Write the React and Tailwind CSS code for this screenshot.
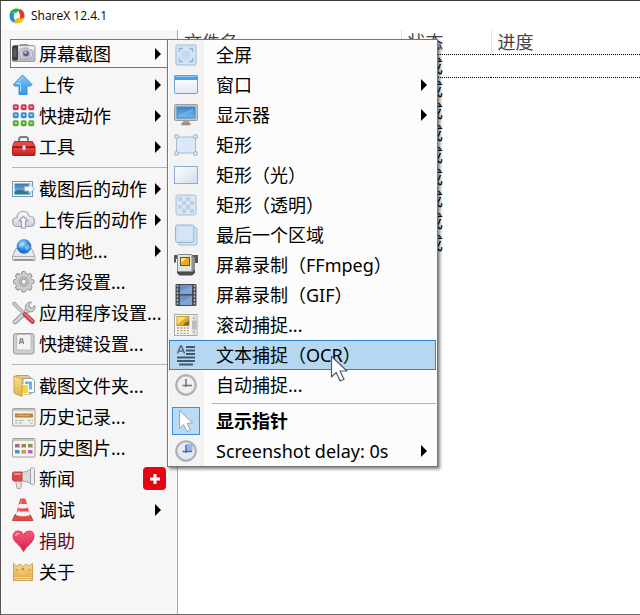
import { useState } from "react";

function Icon({ children, size = 24 }) {
  return (
    <svg width={size} height={size} viewBox="0 0 24 24" fill="none" aria-hidden="true" className="shrink-0">
      {children}
    </svg>
  );
}

function Gradient({ id, from, to }) {
  return (
    <linearGradient id={id} x1="0" y1="0" x2="0" y2="1">
      <stop offset="0" stopColor={from} />
      <stop offset="1" stopColor={to} />
    </linearGradient>
  );
}

const Logo = () => (
  <svg width="16" height="16" viewBox="0 0 16 16" aria-hidden="true" className="shrink-0">
    <path d="M8 .5C4 .3 1 3 .7 6.500c1.500-2 4-2.700 6.300-1.500C9 3.500 10.500 2.500 11 1.200 10 .7 9 .5 8 .5Z" fill="#2fb344" />
    <path d="M11 .9C9.500 2.200 9.300 4.200 11 6.800c.3 1.700 0 3.200-.5 4.200 2 .5 3.500 0 4.800-1.500C16.200 5.500 14.500 2.300 11 .9Z" fill="#e8382c" />
    <path d="M15.300 9.300c-2 1.700-4.800 1.500-6.800.5-1.500 1.200-3.500 2.200-4.200 4.600 4 2.300 9.500 1 11-5.100Z" fill="#f5bd18" />
    <path d="M.6 6.300C0 10 1.500 13 4.700 14.700 6.200 13 6 11.500 4.800 9.500 4.500 8 4.800 6.200 5.700 5 3.300 4 1.500 4.600.6 6.300Z" fill="#1c8fe0" />
    <circle cx="8" cy="7.500" r="2.600" fill="#fff" />
  </svg>
);

const CameraIcon = () => (
  <Icon>
    <defs><Gradient id="cam" from="#e6e6ea" to="#b4b4ba" /></defs>
    <path d="M8 4V2.500h8V4" fill="#b9b9be" stroke="#9a9aa0" />
    <rect x=".5" y="3.500" width="22.500" height="16" rx="1.500" fill="url(#cam)" stroke="#9a9aa2" />
    <path d="M.2 5 1.500 3.500H6V17l-1 1.500H.2Z" fill="#3f3f42" />
    <path d="M1.500 6.500h3v8.500h-3Z" fill="#5c5c61" />
    <ellipse cx="14" cy="11.500" rx="7" ry="5.500" fill="#d3d3db" stroke="#9c9ca8" strokeWidth=".8" />
    <circle cx="14" cy="11.500" r="4" fill="#a7a9ba" />
    <circle cx="14" cy="11.500" r="2.600" fill="#565b80" />
    <circle cx="13.500" cy="10.500" r="1.200" fill="#cdd3e8" />
    <path d="M17 5h5v2h-5Z" fill="#f4f4f6" />
  </Icon>
);

const UploadIcon = () => (
  <Icon>
    <defs><Gradient id="up" from="#7cc8ff" to="#3398ec" /></defs>
    <path d="M10.500 2 20 11.500 18.500 13H15v8.500H7V13H2.500L1.500 11.500Z" fill="url(#up)" stroke="#3b8bd4" strokeLinejoin="round" />
    <path d="M10.500 4 4.500 10.500H8.500v8" stroke="#a5dcff" />
  </Icon>
);

const GridIcon = () => (
  <Icon>
    {["#cf3b50", "#3c90d2", "#5aab35"].map((color, row) =>
      [1.5, 9.5, 17].map((x) => (
        <g key={color + x}>
          <rect x={x} y={row * 8 + 1} width="4.500" height="4.500" rx="1" fill={color} stroke={color} strokeWidth="1.500" />
          <rect x={x + 1} y={row * 8 + 2} width="2.500" height="2" rx=".5" fill="#fff" opacity=".5" />
        </g>
      ))
    )}
  </Icon>
);

const ToolboxIcon = () => (
  <Icon>
    <defs><Gradient id="tool" from="#ec4d46" to="#c01c1c" /></defs>
    <path d="M7 6.500V4.500Q7 2 9.500 2h4Q16 2 16 4.500v2" stroke="#777c80" strokeWidth="1.800" />
    <path d="M2.500 6.500h18l2.500 5v1H.5v-1Z" fill="#e44a45" stroke="#b32a2a" />
    <rect x=".5" y="11.500" width="22.500" height="9" rx="1" fill="url(#tool)" stroke="#a81c1c" />
    <path d="M1 12.500h21.500" stroke="#981717" />
    <rect x="10.500" y="10.500" width="3" height="4.500" rx=".5" fill="#ececec" stroke="#999" strokeWidth=".5" />
  </Icon>
);

const AfterCaptureIcon = () => (
  <Icon>
    <defs><Gradient id="aft" from="#3675bb" to="#8ed4df" /></defs>
    <rect x=".5" y="4.500" width="20" height="15" fill="#f8fbff" stroke="#7894b7" />
    <rect x="2.500" y="6.500" width="16" height="11" fill="url(#aft)" />
    <path d="M2.500 14.500q5-3 9-1t7-1v5h-16Z" fill="#2f7c85" />
    <path d="M12.500 9.500H17V6.500l5.500 5.300-5.500 5.200v-3h-4.500Z" fill="#f6f9fd" stroke="#9fb1c8" strokeLinejoin="round" />
  </Icon>
);

const CloudIcon = () => (
  <Icon>
    <defs><Gradient id="cld" from="#fafafe" to="#cfcfde" /></defs>
    <path d="M6 18.500Q.7 18.500.7 14T5 9.500Q5.500 3.500 11 3.500q5 0 6 4.500 5.500 0 5.500 5.500 0 5-5 5Z" fill="url(#cld)" stroke="#a3a3b8" strokeWidth="1.200" />
    <path d="m11.500 8.500 4.500 4.500h-2.500v7h-4v-7H7Z" fill="#fafaff" stroke="#9c9cb2" strokeWidth="1.200" strokeLinejoin="round" />
  </Icon>
);

const DestinationIcon = () => (
  <Icon>
    <defs>
      <radialGradient id="globe" cx=".4" cy=".3"><stop stopColor="#a4deff" /><stop offset="1" stopColor="#1b73cc" /></radialGradient>
    </defs>
    <path d="M4 9.500h15.500l3.500 8v3q0 1-1 1h-20.500q-1 0-1-1v-3Z" fill="#e9e9eb" stroke="#a0a0a5" />
    <path d="M1 17.500h21.500" stroke="#b0b0b4" />
    <path d="M2 20.500h19.500" stroke="#8c8c90" />
    <circle cx="12" cy="7.500" r="7" fill="url(#globe)" stroke="#2d80c9" strokeWidth=".6" />
    <path d="M7 5 10 2.500l2 2-2 3-3 1ZM13 7.500l4-2 1 3.500-3 3-2-2Z" fill="#a5dbfb" opacity=".6" />
  </Icon>
);

const GearIcon = () => (
  <Icon>
    {[0, 45, 90, 135].map((angle) => (
      <rect key={angle} x="9.500" y="1.500" width="4.500" height="20.500" rx="1.500" fill="#cdcdcd" stroke="#909090" transform={`rotate(${angle} 11.750 11.750)`} />
    ))}
    <circle cx="11.750" cy="11.750" r="7.700" fill="#cdcdcd" />
    <circle cx="11.750" cy="11.750" r="4.700" fill="#c0c0c0" stroke="#a3a3a3" />
    <circle cx="11.750" cy="11.750" r="2.500" fill="#f7f7f7" stroke="#999" />
  </Icon>
);

const WrenchIcon = () => (
  <Icon>
    <path d="m3 21 13-12" stroke="#8b8f93" strokeWidth="4.500" strokeLinecap="round" />
    <path d="m3 21 13-12" stroke="#d6d8da" strokeWidth="2.700" strokeLinecap="round" />
    <path d="M19.500 1 17 4l.5 2.500 2.500.5 2.800-2.800q.9 4-1.800 6t-6-.5Q12 7 14 3.500 16.500.5 19.500 1Z" fill="#cfd2d5" stroke="#94989c" />
    <path d="m.7 2 1.800-1.200L12.500 11l-1.800 1.800L1.200 4Z" fill="#c9ccd0" stroke="#999da1" />
    <path d="m13 13.500 7.500 7" stroke="#c13742" strokeWidth="4.500" strokeLinecap="round" />
    <path d="m13 13 7.500 7" stroke="#ea6d75" strokeWidth="2.300" strokeLinecap="round" />
  </Icon>
);

const KeyIcon = () => (
  <Icon>
    <rect x="1.500" y="1.500" width="20.500" height="20.500" rx="2" fill="#cfcfcf" stroke="#9b9b9b" />
    <rect x="4.500" y="2.500" width="14.500" height="15.500" rx="1.500" fill="#f3f3f3" stroke="#bcbcbc" />
    <path d="m7.500 12 1-5h2l1 5m-3.500-2h3" stroke="#858585" strokeWidth="1.300" />
  </Icon>
);

const FolderIcon = () => (
  <Icon>
    <defs><Gradient id="fold" from="#fbe28f" to="#dfb24b" /></defs>
    <path d="M4 1.500h12l3 2.500v16H4Z" fill="#efcd77" stroke="#c29d4a" />
    <path d="M11 4.500h9l2.500 2v12H11Z" fill="#fbfdff" stroke="#8fa3b6" />
    <path d="M13 7.500h7v8h-7Z" fill="#77aede" />
    <path d="M9 10.500h7.500v9H9Z" fill="#f2d541" stroke="#fff" />
    <path d="m2 2 8 2.500V22.500l-8-3.500Z" fill="url(#fold)" stroke="#c8a24a" strokeLinejoin="round" />
  </Icon>
);

const HistoryIcon = () => (
  <Icon>
    <rect x=".5" y="3.500" width="22.500" height="17.500" rx="1" fill="#f0efed" stroke="#a19f98" />
    <path d="M1 4h21.500v2H1Z" fill="#c9c6c0" />
    <path d="M3 8.500h18v4H3Z" fill="#bd8434" />
    <path d="M5 10.500h13" stroke="#dcad5e" />
    <path d="M3 15.500h9M3 18h7m6-2.500h5m-3 2.500h3" stroke="#b0afab" strokeWidth="1.200" strokeDasharray="3 1" />
  </Icon>
);

const ImageHistoryIcon = () => (
  <Icon>
    <rect x=".5" y="2.500" width="22.500" height="18.500" rx="1" fill="#f6f5f3" stroke="#a19f98" />
    <path d="M1 3h21.500v2H1Z" fill="#c9c6c0" />
    {["#9c6d87", "#a5804c", "#86905c", "#4f93bb", "#cf9a45", "#c05fb0"].map((color, i) => (
      <g key={color}>
        <rect x={3 + (i % 3) * 6.5} y={i < 3 ? 8 : 14} width="4.500" height="4" fill={color} />
        <path d={`M${3 + (i % 3) * 6.5} ${i < 3 ? 11.5 : 17.5}h4.500`} stroke="#e0c36a" />
      </g>
    ))}
  </Icon>
);

const NewsIcon = () => (
  <Icon>
    <path d="M3.500 13h5v3l1.500.5-1.500 5H5Z" fill="#dfdfdf" stroke="#ababab" />
    <path d="M9 5.500q6 0 11-4v15.500q-5-3-11-3Z" fill="#dadadd" stroke="#a2a2a7" />
    <path d="M2 5h8v9H2Q.5 14 .5 12V7Q.5 5 2 5Z" fill="#de4748" stroke="#c14447" />
    <rect x="18.500" y=".7" width="4" height="17" rx="1.800" fill="#eeeef0" stroke="#a2a2a7" />
    <path d="M2 7h7" stroke="#f5a09d" strokeWidth="1.500" />
  </Icon>
);

const ConeIcon = () => (
  <Icon>
    <path d="M3 16.500h15L21 22.500H.5Z" fill="#e04a4a" stroke="#c04444" strokeLinejoin="round" />
    <path d="M9 .5h3.500q1 0 1.200 1L18.500 18.500Q11 22 3.500 18.500L7.800 1.500Q8 .5 9 .5Z" fill="#e45050" />
    <path d="m6.800 6h8.200l1 3.700q-5 1.500-10.200 0ZM4.700 13.500h12.500l.9 3.500q-7 2.500-14.200 0Z" fill="#f1f1f1" />
    <path d="m9.500 2-3.500 16" stroke="#fff" strokeWidth="1.500" opacity=".3" />
  </Icon>
);

const HeartIcon = () => (
  <Icon>
    <defs><Gradient id="heart" from="#f65a79" to="#d91e48" /></defs>
    <path d="M11.500 22.500Q9 17.500 4.500 14 1 11 1 7 1.500 2 6.500 2q4 0 5 4 1.500-4 5.500-4 5 0 5 5 0 4-3.500 7.500-4.500 3.500-7 8Z" fill="url(#heart)" stroke="#d93a5b" />
    <path d="M3.500 7q.5-2.500 3.500-2.500" stroke="#ffa5b6" strokeWidth="1.500" />
  </Icon>
);

const CrownIcon = () => (
  <Icon>
    <defs><Gradient id="crown" from="#f8d98c" to="#d9a84a" /></defs>
    <path d="m1.500 3.500 3 2.500L7.500 4l3.500 2.500L14 4l3 2 3.500-2.500V20.500h-19Z" fill="url(#crown)" stroke="#cda454" strokeLinejoin="round" />
    <path d="M2 17.500h18M3 19.500h16" stroke="#f7e0a4" />
    <circle cx="4.500" cy="10" r="1" fill="#e08a4e" />
    <circle cx="11" cy="9" r="1.200" fill="#dc6f47" />
    <circle cx="17.500" cy="10" r="1" fill="#e08a4e" />
    <path d="m7 13 4-2 4 2-4 2Z" fill="#f6c656" />
  </Icon>
);

const FullscreenIcon = () => (
  <Icon>
    <rect x="2" y="2" width="20" height="20" rx="1" fill="#d3e4f4" stroke="#9dbad6" />
    <path d="M5.500 9V5.500H9m6 0h3.500V9m0 6v3.500H15m-6 0H5.500V15" stroke="#93b4d6" strokeWidth="1.300" />
    <circle cx="12" cy="12" r="4.500" fill="#c3daef" />
  </Icon>
);

const WindowIcon = () => (
  <Icon>
    <defs><Gradient id="win" from="#fff" to="#dfe9f3" /></defs>
    <rect x=".5" y="2.500" width="23" height="18" rx="1" fill="url(#win)" stroke="#6f9fcf" />
    <path d="M.5 2.500h23V7H.5Z" fill="#4c9fe4" />
    <path d="M1.500 3.500h21" stroke="#8cc5f5" />
  </Icon>
);

const MonitorIcon = () => (
  <Icon>
    <defs><Gradient id="mon" from="#3585cb" to="#74b5ea" /></defs>
    <path d="M9 17h6v4H9Z" fill="#a2a6aa" />
    <path d="M7.500 21h9" stroke="#978a81" strokeWidth="2.500" />
    <rect x=".5" y="1.500" width="23" height="16" rx="1" fill="#c3c6c8" stroke="#9a9ea1" />
    <rect x="3" y="4" width="18" height="11" fill="url(#mon)" stroke="#4a88bc" />
    <path d="M4 13 19 5v3L8 14Z" fill="#89c8fa" opacity=".4" />
  </Icon>
);

const RegionIcon = () => (
  <Icon>
    <rect x="2.500" y="4" width="19" height="16" fill="#dbe8f5" stroke="#a5bcd4" />
    {[[2.5, 3.5], [21.5, 3.5], [2.5, 20.5], [21.5, 20.5]].map(([x, y]) => (
      <circle key={`${x}-${y}`} cx={x} cy={y} r="2" fill="#dde6ef" stroke="#9ab0c8" />
    ))}
  </Icon>
);

const LightRegionIcon = () => (
  <Icon>
    <defs><linearGradient id="light" x1="0" y1="0" x2="1" y2="1"><stop stopColor="#fff" /><stop offset="1" stopColor="#cfdeef" /></linearGradient></defs>
    <rect x=".5" y="3.500" width="23" height="17" fill="url(#light)" stroke="#90add0" />
  </Icon>
);

const TransparentIcon = () => (
  <Icon>
    <rect x="2" y="2" width="20" height="20" rx="2" fill="#dbe7f3" stroke="#a5bed6" />
    {[0, 1, 2, 3].map((row) => [0, 2].map((col) => (
      <rect key={`${row}-${col}`} x={4 + (col + (row % 2)) * 4} y={4 + row * 4} width="4" height="4" fill="#b9d0e7" />
    )))}
  </Icon>
);

const LastRegionIcon = () => (
  <Icon>
    <rect x="4.500" y="4.500" width="18.500" height="17.500" rx="2" fill="#d6e6f5" stroke="#9bb9d5" />
    <rect x="1.500" y="2" width="18.500" height="17.500" rx="2" fill="#cbe0f3" stroke="#98b6d3" />
    <path d="M4 4h14v13H4Z" fill="#dbeafa" opacity=".5" />
  </Icon>
);

const CamcorderIcon = () => (
  <Icon>
    <path d="M0 2h8v4H2v3.500H0Zm17 0h7v8h-3V5h-4Z" fill="#565554" />
    <path d="M3 16 17 18l4-3v5l-3 2.500H5.500L3 20Z" fill="#4c4c4d" />
    <rect x="3.500" y="1.500" width="14.500" height="17" rx="1" fill="#e2e2e2" stroke="#888" />
    <path d="M18 3 21 4.500v12L18 19Z" fill="#8f8f8f" />
    <rect x="6.500" y="4.500" width="9" height="8" fill="#dfb01b" stroke="#5d5534" />
    <path d="m7 5h5.500l-5.500 5Z" fill="#ffe679" />
  </Icon>
);

const FilmIcon = () => (
  <Icon>
    <rect x="1.500" y="1" width="21" height="22" rx="1" fill="#464b53" />
    <path d="M3.500 2v20M20.500 2v20" stroke="#b9bec5" strokeWidth="1.500" strokeDasharray="2 1.500" />
    <path d="M6 2h12v9H6Zm0 10.500h12v9.500H6Z" fill="#6a8fc2" />
    <path d="m6 8 12-5v8H6Zm0 11 12-6v9H6Z" fill="#91b2dd" opacity=".6" />
  </Icon>
);

const ScrollIcon = () => (
  <Icon>
    <rect x=".5" y="1.500" width="22.500" height="21" fill="#f4f4f3" stroke="#aaa8a3" />
    <rect x="3" y="3.500" width="12" height="9" fill="#dfb01b" stroke="#c09d3b" />
    <path d="M3.500 4h9l-9 7Z" fill="#ffe366" />
    <path d="M11 9.500q3 0 4-3.500v6.500H9Z" fill="#846926" />
    <path d="M17.500 2h5v20h-5Z" fill="#e3e3e3" />
    <path d="M18 7.500h4.500v9H18Z" fill="#bcbcbc" />
    <path d="m19 5.500 1-1.500 1 1.500Zm0 13 1 1.500 1-1.500Z" fill="#777" />
    <path d="M3 15h12" stroke="#d98f8a" strokeWidth="1.300" strokeDasharray="2 1.300" />
    <path d="M3 17.700h12" stroke="#b5ae52" strokeWidth="1.300" strokeDasharray="2 1.300" />
    <path d="M3 20.300h12" stroke="#8fb0ce" strokeWidth="1.300" strokeDasharray="2 1.300" />
  </Icon>
);

const OcrIcon = () => (
  <Icon>
    <path d="m3.500 10.500 3-7.500h1l3 7.500m-6-2.500h5" stroke="#4e6c8a" strokeWidth="1.600" />
    <path d="M12 4h9M12 7.500h9M12 11h9M3 14.500h18M3 18h18M5 21.500h14" stroke="#42576c" strokeWidth="2" />
  </Icon>
);

const ClockIcon = ({ blue }) => (
  <Icon>
    <circle cx="12" cy="12" r="9.500" fill={blue ? "#e6eaf4" : "#eef0ef"} stroke="#b3b6b8" strokeWidth="2" />
    <circle cx="12" cy="12" r="10.500" stroke="#9a9ea0" strokeWidth=".6" />
    {blue && <path d="M12 5h6.500v7.500H12Z" fill="#a0b1ea" />}
    <path d="M12 6v8M8.500 12.500h9.500" stroke={blue ? "#5369ad" : "#6d7376"} strokeWidth="1.500" />
  </Icon>
);

const PointerIcon = () => (
  <Icon>
    <path d="M5.500 1.500v18l4-4 3.500 7 3.500-1.500-3.500-6.500 5.500-.5Z" fill="#fff" stroke="#9aa7b6" strokeLinejoin="round" />
  </Icon>
);

const Arrow = () => (
  <svg width="6" height="12" viewBox="0 0 6 12" aria-hidden="true" className="shrink-0">
    <path d="M0 0v12l6-6Z" fill="#000" />
  </svg>
);

const SIDEBAR = [
  [
    { label: "屏幕截图", icon: CameraIcon, arrow: true, open: true },
    { label: "上传", icon: UploadIcon, arrow: true },
    { label: "快捷动作", icon: GridIcon, arrow: true },
    { label: "工具", icon: ToolboxIcon, arrow: true },
  ],
  [
    { label: "截图后的动作", icon: AfterCaptureIcon, arrow: true },
    { label: "上传后的动作", icon: CloudIcon, arrow: true },
    { label: "目的地...", icon: DestinationIcon, arrow: true },
    { label: "任务设置...", icon: GearIcon },
    { label: "应用程序设置...", icon: WrenchIcon },
    { label: "快捷键设置...", icon: KeyIcon },
  ],
  [
    { label: "截图文件夹...", icon: FolderIcon },
    { label: "历史记录...", icon: HistoryIcon },
    { label: "历史图片...", icon: ImageHistoryIcon },
    { label: "新闻", icon: NewsIcon, badge: true },
    { label: "调试", icon: ConeIcon, arrow: true },
    { label: "捐助", icon: HeartIcon, color: "text-[#5c0d2b]" },
    { label: "关于", icon: CrownIcon },
  ],
];

const CAPTURE_MENU = [
  { label: "全屏", icon: FullscreenIcon },
  { label: "窗口", icon: WindowIcon, arrow: true },
  { label: "显示器", icon: MonitorIcon, arrow: true },
  { label: "矩形", icon: RegionIcon },
  { label: "矩形（光）", icon: LightRegionIcon },
  { label: "矩形（透明）", icon: TransparentIcon },
  { label: "最后一个区域", icon: LastRegionIcon },
  { label: "屏幕录制（FFmpeg）", icon: CamcorderIcon },
  { label: "屏幕录制（GIF）", icon: FilmIcon },
  { label: "滚动捕捉...", icon: ScrollIcon },
  { label: "文本捕捉（OCR）", icon: OcrIcon, selected: true },
  { label: "自动捕捉...", icon: ClockIcon },
];

function MenuItem({ item, checked, onClick }) {
  const ItemIcon = item.icon;
  return (
    <button
      type="button"
      role="menuitem"
      onClick={onClick}
      className={`flex h-[30px] w-full items-center border pr-2 text-left ${item.selected ? "border-[#2e86cf] bg-[#b5d7f1]" : "border-transparent"}`}
    >
      <span className={`ml-0.5 flex h-7 w-7 items-center justify-center ${checked ? "border border-[#3d8fd6] bg-[#b9dbf5]" : ""}`}>
        <ItemIcon blue={item.blue} />
      </span>
      <span className={`ml-4 flex-1 whitespace-nowrap ${item.bold ? "font-bold" : ""}`}>{item.label}</span>
      {item.arrow && <Arrow />}
    </button>
  );
}

function CaptureMenu() {
  const [showCursor, setShowCursor] = useState(true);
  return (
    <div role="menu" className="absolute top-px left-full z-10 -ml-px w-[271px] border border-[#777] bg-[#fcfcfc] px-px shadow-[2px_2px_3px_rgba(0,0,0,0.5)]">
      <div className="bg-linear-to-r from-[#f3f3f3] from-[35px] to-[#fcfcfc] to-[35px]">
        {CAPTURE_MENU.map((item) => (
          <MenuItem key={item.label} item={item} />
        ))}
        <div className="flex h-1.5 items-center pl-[43px]">
          <div className="h-px w-full bg-[#b5b5b5]" />
        </div>
        <MenuItem
          item={{ label: "显示指针", icon: PointerIcon, bold: true }}
          checked={showCursor}
          onClick={() => setShowCursor(!showCursor)}
        />
        <MenuItem item={{ label: "Screenshot delay: 0s", icon: ClockIcon, arrow: true, blue: true }} />
      </div>
      {/* Mouse cursor */}
      <svg width="20" height="28" viewBox="0 0 20 28" aria-hidden="true" className="absolute top-[315px] left-[162px]">
        <path d="M1.500 1.500v20.500l4.700-4.500 4 8.500 3.800-1.800-4-8.200h7Z" fill="#fff" stroke="#555b66" strokeWidth="1.200" strokeLinejoin="round" />
      </svg>
    </div>
  );
}

function SidebarItem({ item }) {
  const ItemIcon = item.icon;
  return (
    <div className="relative flex h-[31px] items-center">
      <button
        type="button"
        className={`flex h-[29px] w-full items-center border pr-1.5 pl-px text-left ${item.open ? "border-[#777] bg-[#fafafa]" : "border-transparent"}`}
      >
        <ItemIcon />
        <span className={`ml-[3px] flex-1 whitespace-nowrap ${item.color || ""}`}>{item.label}</span>
        {item.arrow && <Arrow />}
      </button>
      {item.badge && (
        <span className="absolute right-0.5 flex h-[23px] w-[23px] items-center justify-center rounded-sm bg-[#e30613]">
          <svg width="10" height="10" viewBox="0 0 10 10" aria-hidden="true">
            <path d="M5 0v10M0 5h10" stroke="#fff" strokeWidth="3" />
          </svg>
        </span>
      )}
      {item.open && <CaptureMenu />}
    </div>
  );
}

function Sidebar() {
  return (
    <nav className="w-[177px] shrink-0 border-r border-[#a9a9a9] bg-[#f6f6f6] px-[9px] pt-2">
      {SIDEBAR.map((group, i) => (
        <div key={i}>
          {i > 0 && (
            <div className="flex h-[11px] items-center pl-0.5">
              <div className="h-px w-full bg-[#b5b5b5]" />
            </div>
          )}
          {group.map((item) => (
            <SidebarItem key={item.label} item={item} />
          ))}
        </div>
      ))}
    </nav>
  );
}

function TaskList() {
  return (
    <main className="min-w-0 flex-1 overflow-hidden">
      <table className="w-full table-fixed border-collapse">
        <thead>
          <tr className="h-6 text-left text-[#444]">
            <th className="w-[223px] border-r border-[#e2e2e2] px-1.5 py-0 leading-6 font-normal">文件名</th>
            <th className="w-[90px] border-r border-[#e2e2e2] px-1.5 py-0 leading-6 font-normal">状态</th>
            <th className="px-1.5 py-0 leading-6 font-normal">进度</th>
          </tr>
        </thead>
        <tbody>
          {Array.from({ length: 9 }, (_, i) => (
            <tr key={i} className={i === 0 ? "border-y border-dotted border-black" : ""}>
              <td className="p-0" />
              <td className="px-1.5 py-0 leading-[22px]">完成</td>
              <td className="p-0" />
            </tr>
          ))}
        </tbody>
      </table>
    </main>
  );
}

function App() {
  return (
    <div className="flex min-h-screen flex-col border border-t-[#3a3a3a] border-r-0 border-b-[#666] border-l-[#555] bg-white font-['Noto_Sans','Noto_Sans_CJK_SC',sans-serif] text-[18px] leading-6 text-black">
      <header className="flex h-[29px] items-center gap-1.5 px-2">
        <Logo />
        <h1 className="font-['Open_Sans',sans-serif] text-xs">ShareX 12.4.1</h1>
      </header>
      <div className="flex flex-1">
        <Sidebar />
        <TaskList />
      </div>
    </div>
  );
}

export default App;
